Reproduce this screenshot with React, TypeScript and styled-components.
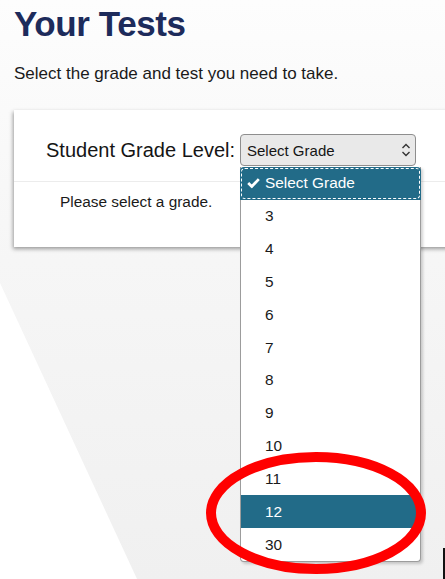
import React from "react";
import styled, { createGlobalStyle } from "styled-components";

const GlobalStyle = createGlobalStyle`
  html, body {
    margin: 0;
    padding: 0;
  }
  body {
    font-family: "Liberation Sans", Arial, sans-serif;
    background: linear-gradient(180deg, #fdfdfd 0%, #f6f6f6 45%, #f0f0f0 100%);
    overflow: hidden;
  }
`;

const Page = styled.main`
  position: relative;
  width: 445px;
  height: 579px;
  box-sizing: border-box;
  padding: 4px 0 0 14px;
  overflow: hidden;

  &::before {
    content: "";
    position: absolute;
    inset: 0;
    background: #fff;
    clip-path: polygon(0 283px, 137px 579px, 0 579px);
  }
`;

const Content = styled.div`
  position: relative;
  z-index: 1;
`;

const Title = styled.h1`
  margin: 0;
  font-size: 35px;
  font-weight: 700;
  letter-spacing: -0.4px;
  color: #1d2b5b;
`;

const Intro = styled.p`
  margin: 20px 0 0;
  font-size: 17px;
  color: #1a1a1a;
`;

const Card = styled.section`
  margin-top: 26px;
  width: 480px;
  background: #fff;
  box-shadow: -1px 2px 4px rgba(0, 0, 0, 0.38);
`;

const GradeRow = styled.div`
  display: flex;
  align-items: center;
  gap: 5px;
  padding: 24px 0 15px 32px;
  border-bottom: 1px solid #ececec;
`;

const Label = styled.label`
  font-size: 20px;
  color: #151515;
`;

const SelectWrap = styled.div`
  position: relative;
  width: 176px;
`;

const SelectBox = styled.div`
  height: 32px;
  box-sizing: border-box;
  display: flex;
  align-items: center;
  justify-content: space-between;
  padding: 0 4px 0 6px;
  border: 1px solid #8e8e8e;
  border-radius: 4px;
  background: #e9e9e9;
  font-size: 15px;
  color: #151515;
`;

const Options = styled.ul`
  position: absolute;
  top: calc(100% + 1px);
  left: 0;
  width: 181px;
  box-sizing: border-box;
  margin: 0;
  padding: 0;
  list-style: none;
  background: #fff;
  border: 1px solid #9c9c9c;
  border-top: none;
  border-radius: 0 0 4px 4px;
  box-shadow: 2px 2px 3px rgba(0, 0, 0, 0.18);
  z-index: 5;
`;

const Option = styled.li<{ $active?: boolean; $focused?: boolean }>`
  position: relative;
  height: 32.85px;
  display: flex;
  align-items: center;
  padding-left: 24px;
  font-size: 15.4px;
  color: ${(p) => (p.$active ? "#fff" : "#1a1a1a")};
  background: ${(p) => (p.$active ? "#226b88" : "transparent")};
  border-radius: ${(p) => (p.$focused ? "4px 4px 0 0" : "0")};
  margin: ${(p) => (p.$focused ? "0 -1px 0 -1px" : "0")};
  padding-left: ${(p) => (p.$focused ? "25px" : "24px")};

  &::after {
    content: "";
    display: ${(p) => (p.$focused ? "block" : "none")};
    position: absolute;
    inset: 1px;
    border: 1px dashed #fff;
    border-radius: 4px;
  }
`;

const Check = styled.svg`
  position: absolute;
  left: 7px;
  top: 50%;
  transform: translateY(-50%);
`;

const Message = styled.p`
  margin: 0;
  padding: 11px 0 36px 46px;
  font-size: 15.4px;
  color: #1a1a1a;
`;

const Annotation = styled.svg`
  position: absolute;
  left: 200px;
  top: 446px;
  z-index: 10;
`;

const Caret = styled.span`
  position: absolute;
  left: 443px;
  top: 548px;
  width: 2px;
  height: 31px;
  background: #111;
  z-index: 10;
`;

const grades = ["3", "4", "5", "6", "7", "8", "9", "10", "11", "12", "30"];

export default function App() {
  return (
    <>
      <GlobalStyle />
      <Page>
        <Content>
          <Title>Your Tests</Title>
          <Intro>Select the grade and test you need to take.</Intro>
          <Card>
            <GradeRow>
              <Label>Student Grade Level:</Label>
              <SelectWrap>
                <SelectBox>
                  <span>Select Grade</span>
                  <svg width="10" height="16" viewBox="0 0 10 16" fill="none">
                    <path d="M1.5 6 L5 2.5 L8.5 6" stroke="#333" strokeWidth="1.4" />
                    <path d="M1.5 10 L5 13.5 L8.5 10" stroke="#333" strokeWidth="1.4" />
                  </svg>
                </SelectBox>
                <Options>
                  <Option $active $focused>
                    <Check width="13" height="11" viewBox="0 0 13 11" fill="none">
                      <path d="M1.2 5.6 L4.8 9 L11.8 1.6" stroke="#fff" strokeWidth="2.8" />
                    </Check>
                    Select Grade
                  </Option>
                  {grades.map((g) => (
                    <Option key={g} $active={g === "12"}>
                      {g}
                    </Option>
                  ))}
                </Options>
              </SelectWrap>
            </GradeRow>
            <Message>Please select a grade.</Message>
          </Card>
        </Content>
        <Annotation width="240" height="140" viewBox="0 0 240 140">
          <ellipse cx="116" cy="67" rx="105" ry="56" fill="none" stroke="#ff0000" strokeWidth="10" />
        </Annotation>
        <Caret />
      </Page>
    </>
  );
}
